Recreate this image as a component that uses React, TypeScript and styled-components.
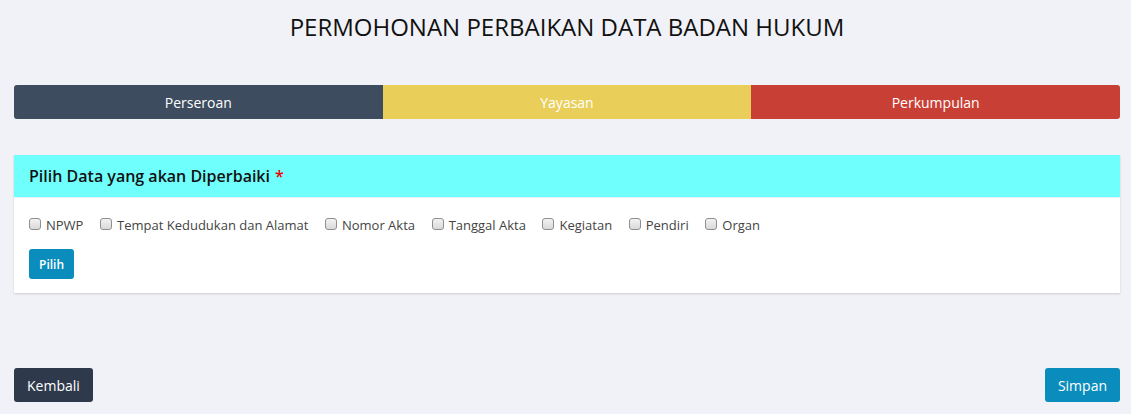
import styled, { createGlobalStyle } from "styled-components";

const GlobalStyle = createGlobalStyle`
  html, body {
    margin: 0;
    padding: 0;
    background: #f1f2f7;
    font-family: "Open Sans", "Noto Sans", sans-serif;
    color: #333;
  }
`;

const Page = styled.div`
  width: 1131px;
  height: 414px;
  padding: 0 11px 0 14px;
  box-sizing: border-box;
  display: flex;
  flex-direction: column;
`;

const Title = styled.h1`
  margin: 12px 0 0;
  height: 30px;
  font-size: 24px;
  font-weight: 400;
  color: #111;
  text-align: center;
  line-height: 30px;
`;

const TypeBar = styled.div`
  margin-top: 43px;
  display: grid;
  grid-template-columns: repeat(3, 1fr);
  height: 34px;
  border-radius: 3px;
  overflow: hidden;
`;

const TypeTab = styled.div<{ $bg: string }>`
  background: ${(p) => p.$bg};
  color: #fff;
  font-size: 14px;
  display: flex;
  align-items: center;
  justify-content: center;
`;

const Panel = styled.div`
  margin-top: 36px;
  background: #fff;
  box-shadow: 0 1px 2px rgba(0, 0, 0, 0.15);
`;

const PanelHeader = styled.div`
  background: #6ffffd;
  height: 42px;
  padding: 0 15px;
  display: flex;
  align-items: center;
  font-size: 16px;
  font-weight: 600;
  color: #111;
  border-bottom: 1px solid #e8f6f6;
`;

const Required = styled.span`
  color: #e00;
  margin-left: 5px;
`;

const PanelBody = styled.div`
  padding: 18px 15px 14px;
`;

const OptionRow = styled.div`
  display: flex;
  gap: 16.6px;
  align-items: center;
`;

const Option = styled.label`
  display: flex;
  align-items: center;
  gap: 5px;
  font-size: 13px;
  color: #444;
`;

const Check = styled.input`
  appearance: none;
  margin: 0;
  width: 12px;
  height: 12px;
  border: 1px solid #8f8f8f;
  border-radius: 3px;
  background: linear-gradient(#f2f2f2, #d9d9d9);
  position: relative;
  top: -1px;
`;

const Button = styled.button<{ $bg: string; $small?: boolean }>`
  background: ${(p) => p.$bg};
  color: #fff;
  border: none;
  border-radius: 3px;
  font-family: inherit;
  font-size: ${(p) => (p.$small ? "12px" : "14px")};
  font-weight: ${(p) => (p.$small ? 600 : 400)};
  height: ${(p) => (p.$small ? "30px" : "34px")};
  padding: 0 ${(p) => (p.$small ? "10px" : "13px")};
`;

const PilihButton = styled(Button)`
  margin-top: 15px;
`;

const Footer = styled.div`
  margin-top: auto;
  margin-bottom: 12px;
  display: flex;
  justify-content: space-between;
`;

const options = [
  "NPWP",
  "Tempat Kedudukan dan Alamat",
  "Nomor Akta",
  "Tanggal Akta",
  "Kegiatan",
  "Pendiri",
  "Organ",
];

export default function App() {
  return (
    <>
      <GlobalStyle />
      <Page>
        <Title>PERMOHONAN PERBAIKAN DATA BADAN HUKUM</Title>
        <TypeBar>
          <TypeTab $bg="#3d4c5f">Perseroan</TypeTab>
          <TypeTab $bg="#e9cf5a">Yayasan</TypeTab>
          <TypeTab $bg="#c83f35">Perkumpulan</TypeTab>
        </TypeBar>
        <Panel>
          <PanelHeader>
            Pilih Data yang akan Diperbaiki<Required>*</Required>
          </PanelHeader>
          <PanelBody>
            <OptionRow>
              {options.map((o) => (
                <Option key={o}>
                  <Check type="checkbox" />
                  {o}
                </Option>
              ))}
            </OptionRow>
            <PilihButton $bg="#0a8dbd" $small>
              Pilih
            </PilihButton>
          </PanelBody>
        </Panel>
        <Footer>
          <Button $bg="#2e3a4b">Kembali</Button>
          <Button $bg="#0a8dbd">Simpan</Button>
        </Footer>
      </Page>
    </>
  );
}
